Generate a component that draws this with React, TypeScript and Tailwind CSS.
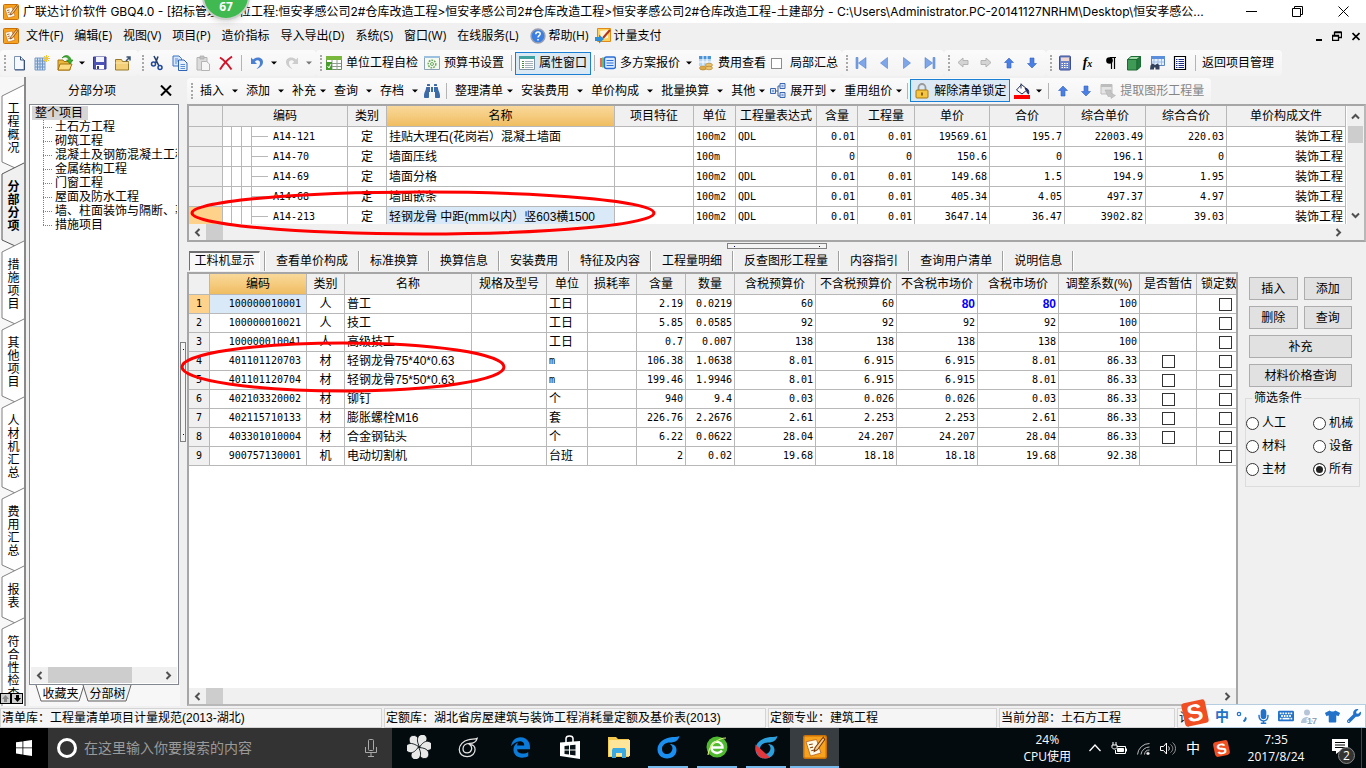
import type { ReactNode } from "react";
import clsx from "clsx";
import { FaBinoculars, FaEdgeLegacy, FaKeyboard, FaMicrophone, FaTshirt, FaWrench } from "react-icons/fa";

/* ---------- icons ---------- */

function Svg({ size = 16, children }: { size?: number; children: ReactNode }) {
  return (
    <svg width={size} height={size} viewBox="0 0 16 16" fill="none" className="shrink-0">
      {children}
    </svg>
  );
}

function AppIcon({ size = 16 }: { size?: number }) {
  return (
    <Svg size={size}>
      <rect x="0.5" y="0.5" width="15" height="15" rx="1" fill="#f6a21c" stroke="#c96f08" />
      <path d="M2 4.500l7-1.500 3 9-7 2z" fill="#fff8e6" stroke="#b55a10" strokeWidth="0.5" />
      <path d="M4 6.500l2.500-.5M4.700 8.500l2-.4M5.500 10.500l3-.8" stroke="#8a4a14" strokeWidth="0.8" />
      <path d="M13.500 1.500L8 8.500l-.5 2.500 2.200-1.200L14.500 3z" fill="#f3c98a" stroke="#7a3708" strokeWidth="0.7" />
    </Svg>
  );
}

const newDoc = (
  <Svg>
    <path d="M3.500 1.500h6l3.500 3.500v9.500H3.500z" fill="#f6faff" stroke="#7c93b4" />
    <path d="M9.500 1.500V5H13M13.500 5v10H4" stroke="#38517c" />
  </Svg>
);
const newSheet = (
  <Svg>
    <path d="M1 3h10v12H1z" fill="#cfe0f4" stroke="#7b9cc6" />
    <path d="M3.500 3v12M6 3v12M8.500 3v12M1 6h10M1 9h10M1 12h10" stroke="#6f93c2" />
    <path d="M12.500 0v7M9 3.500h7M10 1l5 5M15 1l-5 5" stroke="#f7c635" />
  </Svg>
);
const openFile = (
  <Svg>
    <path d="M1 5h5l1 1.500h6V15H1z" fill="#e9b640" stroke="#a8740e" />
    <path d="M3 9h12l-2.500 6H1z" fill="#fbdc82" stroke="#a8740e" />
    <path d="M5 3c3-2 6-1 7 2h-2.500L13 9l3-4h-1.800C13 0 8-1 5 3z" fill="#3fae2e" stroke="#1f7a18" strokeWidth="0.6" />
  </Svg>
);
const save = (
  <Svg>
    <path d="M1.500 2h12.500v12H1.500z" fill="#4e52b4" stroke="#34378e" />
    <path d="M4 2h8v5H4z" fill="#f2f4ff" />
    <path d="M4 10h8v4H4z" fill="#fff" />
    <path d="M5 11h2v3H5z" fill="#34378e" />
  </Svg>
);
const exportFolder = (
  <Svg>
    <path d="M0.500 4.500h6l1 2h6V15h-13z" fill="#f3cf77" stroke="#9a7a2a" />
    <path d="M0.500 8h13" stroke="#fbe7ae" />
    <path d="M11 6l4-4M11.500 2H15v3.500" stroke="#3d5374" strokeWidth="1.500" />
  </Svg>
);
const cut = (
  <Svg>
    <path d="M5 1l5 10M9 1.500L6.500 8" stroke="#27406c" strokeWidth="1.600" />
    <circle cx="4.500" cy="9" r="2" stroke="#20489c" strokeWidth="1.500" />
    <circle cx="11" cy="12.500" r="2" stroke="#20489c" strokeWidth="1.500" />
  </Svg>
);
const copy = (
  <Svg>
    <path d="M1 1h6l2.500 2.500V11H1z" fill="#d6e6fb" stroke="#3f74c4" />
    <path d="M6.500 5h5.500l3 3v7.500H6.500z" fill="#e8f1fd" stroke="#2f64b8" />
    <path d="M8.500 9.500h4.500M8.500 11.500h4.500M8.500 13.500h4.500M3 4h3M3 6h3M3 8h2" stroke="#5b8fd8" />
  </Svg>
);
const paste = (
  <Svg>
    <path d="M2 2.500h10V15H2z" fill="#dcdcdc" stroke="#b4b4b4" />
    <path d="M5 1h4v3H5z" fill="#c4c4c4" stroke="#aaa" strokeWidth="0.700" />
    <path d="M6.500 6.500h5l3 2.500v6.500h-8z" fill="#f6f6f6" stroke="#b4b4b4" />
  </Svg>
);
const remove = (
  <Svg>
    <path d="M2 2.500C6 5 10 9.500 13.500 14.500M14 1.500C9 5 5 9.500 2 14.500" stroke="#d31027" strokeWidth="1.900" />
  </Svg>
);

function UndoIcon({ redo }: { redo?: boolean }) {
  return (
    <svg width="16" height="16" viewBox="0 0 16 16" className={clsx("shrink-0", redo && "-scale-x-100")}>
      <path
        d="M2 2.500v6.500h6L5.800 6.800C8 4.500 11 5 11 8c0 2.500-1.500 4-3.500 6 4-1.500 6.500-4 6.500-7 0-4.500-6-6-10-2.500z"
        fill={redo ? "#cdcdcd" : "#4b7fd4"}
      />
    </svg>
  );
}

const checkSheet = (
  <Svg>
    <path d="M0.500 1.500h15v13H0.500z" fill="#fff" stroke="#6f8f5f" />
    <path d="M0 1h16v4H0z" fill="#79b83d" />
    <path d="M1 8.500h14M1 11.500h14M6 5v10M11 5v10" stroke="#8e9e8e" />
    <path d="M0 7h6v8H0z" fill="#479d2b" />
    <path d="M1.500 11l1.500 2 2-4" stroke="#fff" />
  </Svg>
);
const bookSettings = (
  <Svg>
    <path d="M0.500 1.500h15v13H0.500z" fill="#f4faf0" stroke="#8aa2b4" />
    <path d="M0 1h16v2H0z" fill="#9cc0df" />
    <circle cx="8" cy="9" r="3.800" stroke="#6dab60" strokeWidth="1.500" strokeDasharray="1.800 1" />
    <circle cx="8" cy="9" r="1.500" stroke="#6dab60" />
  </Svg>
);
const propWindow = (
  <Svg>
    <path d="M0.500 1.500h15v13H0.500z" fill="#fdfdfd" stroke="#7f94a4" />
    <path d="M0 1h16v3H0z" fill="#41a3a0" />
    <path d="M3 6.500h2M3 8.500h2M3 10.500h2M3 12.500h2" stroke="#4b8a3b" />
    <path d="M6 6.500h8M6 8.500h8M6 10.500h8M6 12.500h8" stroke="#a4b0b8" />
  </Svg>
);
const multiQuote = (
  <Svg>
    <path d="M1 3v9" stroke="#e33" strokeWidth="1.500" />
    <path d="M3 2.500v10" stroke="#4aab38" strokeWidth="1.500" />
    <rect x="4.500" y="2" width="11" height="11.500" rx="2" fill="#dcecff" stroke="#2c6ed5" strokeWidth="1.400" />
    <path d="M6.500 5.500h7M6.500 8h7M6.500 10.500h7" stroke="#2c6ed5" />
  </Svg>
);
const feeView = (
  <Svg>
    <path d="M1 1h12v10H1z" fill="#b5d5f2" />
    <path d="M1 1h12v3H1z" fill="#4b94d8" />
    <path d="M5 1v10M9 1v10M1 7h12" stroke="#fff" />
    <ellipse cx="5" cy="13" rx="3.500" ry="2" fill="#dba94c" stroke="#b07d24" strokeWidth="0.600" />
    <ellipse cx="11" cy="10" rx="3.500" ry="1.800" fill="#eac36c" stroke="#b07d24" strokeWidth="0.600" />
    <ellipse cx="11" cy="13" rx="3.500" ry="1.800" fill="#eac36c" stroke="#b07d24" strokeWidth="0.600" />
  </Svg>
);
const first = (
  <Svg>
    <path d="M3 2.500h2v11H3zM13 2.500v11L5.500 8z" fill="#7fa6e8" stroke="#3f72c4" strokeWidth="0.500" />
  </Svg>
);
const prev = (
  <Svg>
    <path d="M11.500 2.500v11L4.500 8z" fill="#7fa6e8" stroke="#3f72c4" strokeWidth="0.500" />
  </Svg>
);
const next = (
  <Svg>
    <path d="M4.500 2.500v11l7-5.500z" fill="#7fa6e8" stroke="#3f72c4" strokeWidth="0.500" />
  </Svg>
);
const last = (
  <Svg>
    <path d="M11 2.500h2v11h-2zM3 2.500v11L10.500 8z" fill="#7fa6e8" stroke="#3f72c4" strokeWidth="0.500" />
  </Svg>
);
const left = (
  <Svg>
    <path d="M8 3L3 7.500 8 12V9.500h5v-4H8z" fill="#d4d4d4" stroke="#b4b4b4" />
  </Svg>
);
const right = (
  <Svg>
    <path d="M8 3l5 4.500L8 12V9.500H3v-4h5z" fill="#d4d4d4" stroke="#b4b4b4" />
  </Svg>
);
const up = (
  <Svg>
    <path d="M8 3l4.500 4.500H10V13H6V7.500H3.500z" fill="#4a80e6" stroke="#3563bd" strokeWidth="0.600" />
  </Svg>
);
const down = (
  <Svg>
    <path d="M8 13L3.500 8.500H6V3h4v5.500h2.500z" fill="#4a80e6" stroke="#3563bd" strokeWidth="0.600" />
  </Svg>
);
const calculator = (
  <Svg>
    <rect x="2.500" y="1" width="11" height="14" rx="1" fill="#6c83c8" stroke="#3d4f94" />
    <path d="M4 2.500h8V6H4z" fill="#f0d8d0" />
    <path d="M4.500 8.500h7M4.500 10.500h7M4.500 12.500h7" stroke="#fff" strokeDasharray="1.500 1" />
  </Svg>
);
const pilcrow = (
  <Svg>
    <path d="M13 2.500H7M8.500 3v11M11.500 3v11" stroke="#000" strokeWidth="1.200" />
    <circle cx="6.500" cy="5.500" r="3.300" fill="#000" />
  </Svg>
);
const cube = (
  <Svg>
    <path d="M1.500 4.500h9.500V15H1.500z" fill="#3f9a55" stroke="#1c6a34" />
    <path d="M1.500 4.500L5 1.500h9.500L11 4.500z" fill="#a4d8a8" stroke="#1c6a34" />
    <path d="M11 15V4.500l3.500-3V12z" fill="#207a3c" stroke="#1c6a34" />
  </Svg>
);
const searchSheet = (
  <Svg>
    <path d="M2.500 1.500h13v9h-13z" fill="#e4effc" stroke="#5b84c4" />
    <path d="M2 1h14v3H2z" fill="#5b8fdc" />
    <path d="M5 4v6M9 4v6M12.500 4v6M3 7h12" stroke="#9dbbe6" />
    <path d="M1.500 10.500l2-2 2.500 1.500 2.500-1.500 2 2v4h-4v-2H5v2H1z" fill="#33415c" />
  </Svg>
);
const listIcon = (
  <Svg>
    <path d="M2.500 1.500h11v13h-11z" fill="#fff" stroke="#000" strokeWidth="1.200" />
    <path d="M4 4.500h1.500M4 6.500h1.500M4 8.500h1.500M4 10.500h1.500M4 12.500h1.500M6.500 4.500H12M6.500 6.500H12M6.500 8.500H12M6.500 10.500H12M6.500 12.500H12" stroke="#1a2a80" />
  </Svg>
);
const expandTree = (
  <Svg>
    <path d="M5 8h3M8 3v10M8 3h2M8 13h2" stroke="#3c5f9c" />
    <path d="M0.500 5.500h5v5h-5zM10 0.500h5v5h-5zM10 9.500h5v5h-5z" fill="#d4e3f8" stroke="#3c66b0" />
    <path d="M2 8h2M11.500 3h2M11.500 12h2" stroke="#3c66b0" />
  </Svg>
);
const lock = (
  <Svg>
    <path d="M4.500 7V4.500a3.500 3.500 0 017 0V7" stroke="#9a9a9a" strokeWidth="1.800" />
    <rect x="2" y="7" width="12" height="8" rx="1" fill="#f5c542" stroke="#a9790f" />
    <path d="M8 9.500v3" stroke="#6c4708" strokeWidth="1.600" />
  </Svg>
);
const paintBucket = (
  <Svg>
    <path d="M2.500 7L7.500 1.500l6 5L8 11z" fill="#fff" stroke="#222a50" />
    <path d="M7 0.500v5M13 5.500c2 2 2 4 1.500 5.500C13 10.500 13 7.500 11 5.500z" fill="#222a80" stroke="#222a50" />
    <path d="M0 12h16v4H0z" fill="#f00" />
  </Svg>
);
const extract = (
  <Svg>
    <path d="M1 1.500h11V11H1z" fill="#e4e4e4" stroke="#bdbdbd" />
    <path d="M1 1h11v3H1z" fill="#bdbdbd" />
    <path d="M5 7h6v3l4.500 2.500L11 15.500v-2H8z" fill="#c4c4c4" stroke="#acacac" strokeWidth="0.500" />
  </Svg>
);
const help = (
  <Svg>
    <circle cx="8" cy="8" r="7" fill="#3b7fe0" stroke="#9a9fb0" strokeWidth="1.400" />
    <path d="M5.800 6.200c0-3 4.400-2.800 4.400-.2 0 1.600-2.200 1.700-2.200 3.500M8 11v1.500" stroke="#fff" strokeWidth="1.500" />
  </Svg>
);
const payIcon = (
  <Svg>
    <path d="M2.500 0.500h13v13h-13z" fill="#fbd25c" stroke="#dd8a18" />
    <path d="M5 3l8-1v8l-7 1z" fill="#fff6df" />
    <path d="M15 2L8 10" stroke="#b5341c" strokeWidth="2" />
    <path d="M0 9h4V6.500L9 11l-5 4.500V13H0z" fill="#2d8fd8" />
  </Svg>
);

function Swirl({ color, band }: { color: string; band?: boolean }) {
  return (
    <svg width="24" height="24" viewBox="0 0 24 24" fill="none">
      <path
        d="M23.500 1c-3 1.500-6 .5-10 1.500C6 4 1.500 9 1.500 14.500c0 5 4 9 9.500 9 6 0 9.500-4 9.500-8.500 0-4-3-6-6.500-6 2.500 2 3 4 2 6.500-1 2.500-3 3.500-5 3.500-3 0-5-2-5-5 0-4 3.500-6.500 8-6.500 5 0 8.500-2 9.500-6.500z"
        fill={color}
      />
      {band && <path d="M1.500 9.500L16 22.500c-3 1.500-8 1.500-11-1-3-3-4-7.500-3.500-12z" fill="#e0383c" />}
    </svg>
  );
}

/* ---------- toolbar pieces ---------- */

function Arrow({ dim }: { dim?: boolean }) {
  return (
    <svg width="6" height="4" viewBox="0 0 6 4" className="shrink-0">
      <path d="M0 0.500h6l-3 3z" fill={dim ? "#777" : "#000"} />
    </svg>
  );
}

function Grip() {
  return <div className="h-4 w-[3px] shrink-0 border-l-2 border-dotted border-[#a8a8a8]" />;
}

function Sep({ narrow }: { narrow?: boolean }) {
  return (
    <div className={clsx("flex shrink-0 justify-center", narrow ? "w-1.5" : "w-2")}>
      <div className="h-4 w-px bg-[#b4b4b4]" />
    </div>
  );
}

function Band({ className, children }: { className?: string; children: ReactNode }) {
  return (
    <div
      className={clsx(
        "flex h-[26px] shrink-0 items-center rounded-sm bg-gradient-to-b from-[#fbfbfb] to-[#f3f3f3] pl-1",
        className,
      )}
    >
      <Grip />
      {children}
    </div>
  );
}

function IconBtn({ icon, label }: { icon: ReactNode; label: string }) {
  return (
    <button aria-label={label} className="flex h-6 w-[23px] shrink-0 items-center justify-center">
      {icon}
    </button>
  );
}

function ArrowBtn({ label, dim }: { label: string; dim?: boolean }) {
  return (
    <button aria-label={label} className="flex h-6 w-3 shrink-0 items-center justify-center">
      <Arrow dim={dim} />
    </button>
  );
}

interface ToolProps {
  icon?: ReactNode;
  label: string;
  pressed?: boolean;
  disabled?: boolean;
}

function Tool({ icon, label, pressed, disabled }: ToolProps) {
  return (
    <button
      className={clsx(
        "flex h-[23px] shrink-0 items-center gap-1 px-[3px] whitespace-nowrap",
        pressed && "border border-[#1b7fd4] bg-[#dbe9f5]",
        disabled && "text-[#858585]",
      )}
    >
      {icon}
      {label}
    </button>
  );
}

function MenuTool({ icon, label, split }: { icon?: ReactNode; label: string; split?: boolean }) {
  return (
    <button
      className={clsx(
        "flex h-[23px] shrink-0 items-center whitespace-nowrap pr-0.5",
        split ? "gap-2" : "gap-1",
        icon ? "pl-[3px]" : "pl-1.5",
      )}
    >
      {icon}
      {label}
      <Arrow />
    </button>
  );
}

/* ---------- window chrome ---------- */

function TitleBar() {
  return (
    <header className="flex h-[23px] shrink-0 items-center bg-white pl-[3px]">
      <AppIcon />
      <h1 className="ml-1 min-w-0 flex-1 truncate font-['Inter','Noto_Sans_CJK_SC',sans-serif]">
        广联达计价软件 GBQ4.0 - [招标管理&gt;单位工程:恒安孝感公司2#仓库改造工程&gt;恒安孝感公司2#仓库改造工程&gt;恒安孝感公司2#仓库改造工程-土建部分 -
        C:\Users\Administrator.PC-20141127NRHM\Desktop\恒安孝感公...
      </h1>
      <div className="flex">
        <button aria-label="最小化" className="flex h-[23px] w-[46px] items-center justify-center">
          <svg width="11" height="11"><path d="M0 5.500h11" stroke="#000" /></svg>
        </button>
        <button aria-label="还原" className="flex h-[23px] w-[46px] items-center justify-center">
          <svg width="11" height="11" fill="none" stroke="#000"><path d="M0.500 2.500h8v8h-8zM2.500 2.500v-2h8v8h-2" /></svg>
        </button>
        <button aria-label="关闭" className="flex h-[23px] w-[46px] items-center justify-center">
          <svg width="11" height="11"><path d="M0.500 0.500l10 10M10.500 0.500l-10 10" stroke="#000" /></svg>
        </button>
      </div>
    </header>
  );
}

const menus = ["文件(F)", "编辑(E)", "视图(V)", "项目(P)", "造价指标", "导入导出(D)", "系统(S)", "窗口(W)", "在线服务(L)"];

function MenuBar() {
  return (
    <nav className="flex h-[26px] shrink-0 items-center gap-[11px] pl-[3px] whitespace-nowrap">
      <div className="-mr-1">
        <AppIcon />
      </div>
      {menus.map((m) => (
        <button key={m}>{m}</button>
      ))}
      <div className="flex gap-1.5">
        <button className="flex items-center gap-[3px]">{help}帮助(H)</button>
        <button className="flex items-center gap-[3px]">{payIcon}计量支付</button>
      </div>
      <div className="ml-auto flex items-center gap-2.5 pr-1.5">
        <button aria-label="最小化文档">
          <svg width="6" height="10"><path d="M0 9h6" stroke="#000" strokeWidth="2" /></svg>
        </button>
        <button aria-label="还原文档">
          <svg width="10" height="10" fill="none" stroke="#000"><path d="M0.500 4.500h6v5h-6zM0.500 5h6M2.500 4V1.500h7v5H7M2.500 1h7" strokeWidth="1.300" /></svg>
        </button>
        <button aria-label="关闭文档">
          <svg width="8" height="9"><path d="M0.500 1l7 7M7.500 1l-7 7" stroke="#000" strokeWidth="1.700" /></svg>
        </button>
      </div>
    </nav>
  );
}

function MainToolbar() {
  return (
    <div className="flex h-7 shrink-0 items-center">
      <Band className="w-[138px]">
        <IconBtn icon={newDoc} label="新建" />
        <IconBtn icon={newSheet} label="新建工程" />
        <IconBtn icon={openFile} label="打开" />
        <ArrowBtn label="最近文件" />
        <IconBtn icon={save} label="保存" />
        <IconBtn icon={exportFolder} label="导出" />
      </Band>
      <Band className="w-[178px]">
        <IconBtn icon={cut} label="剪切" />
        <IconBtn icon={copy} label="复制" />
        <IconBtn icon={paste} label="粘贴" />
        <IconBtn icon={remove} label="删除" />
        <Sep />
        <IconBtn icon={<UndoIcon />} label="撤销" />
        <ArrowBtn label="撤销列表" />
        <IconBtn icon={<UndoIcon redo />} label="恢复" />
        <ArrowBtn label="恢复列表" dim />
      </Band>
      <Band className="w-[526px]">
        <Tool icon={checkSheet} label="单位工程自检" />
        <Tool icon={bookSettings} label="预算书设置" />
        <Sep />
        <Tool icon={propWindow} label="属性窗口" pressed />
        <Sep narrow />
        <Tool icon={multiQuote} label="多方案报价" />
        <ArrowBtn label="多方案列表" />
        <Tool icon={feeView} label="费用查看" />
        <label className="flex items-center gap-2 pl-0.5 whitespace-nowrap">
          <input type="checkbox" className="size-[11px] appearance-none border border-[#8c8c8c] bg-white" />
          局部汇总
        </label>
      </Band>
      <Band className="w-[102px]">
        <IconBtn icon={first} label="首条" />
        <IconBtn icon={prev} label="上一条" />
        <IconBtn icon={next} label="下一条" />
        <IconBtn icon={last} label="末条" />
      </Band>
      <Band className="w-[102px]">
        <IconBtn icon={left} label="左移" />
        <IconBtn icon={right} label="右移" />
        <IconBtn icon={up} label="上移" />
        <IconBtn icon={down} label="下移" />
      </Band>
      <Band className="w-[236px]">
        <IconBtn icon={calculator} label="计算器" />
        <IconBtn
          icon={
            <span className="font-['Liberation_Serif',serif] text-sm font-bold italic">
              f<span className="text-[10px]">x</span>
            </span>
          }
          label="函数"
        />
        <IconBtn icon={pilcrow} label="特殊符号" />
        <IconBtn icon={cube} label="图元" />
        <IconBtn icon={searchSheet} label="查找" />
        <IconBtn icon={listIcon} label="列表" />
        <Sep />
        <Tool label="返回项目管理" />
      </Band>
    </div>
  );
}

function EditToolbar() {
  return (
    <div className="flex h-[27px] shrink-0 items-center">
      <Band className="pr-1">
        <MenuTool label="插入" split />
        <MenuTool label="添加" split />
        <MenuTool label="补充" />
        <MenuTool label="查询" split />
        <MenuTool label="存档" split />
        <IconBtn icon={<FaBinoculars className="size-4 text-[#3c6aa8]" />} label="查找" />
        <Sep narrow />
        <MenuTool label="整理清单" />
        <MenuTool label="安装费用" split />
        <MenuTool label="单价构成" split />
        <MenuTool label="批量换算" split />
        <MenuTool label="其他" />
        <MenuTool icon={expandTree} label="展开到" />
        <MenuTool label="重用组价" />
        <Sep narrow />
        <Tool icon={lock} label="解除清单锁定" pressed />
        <IconBtn icon={paintBucket} label="填充颜色" />
        <ArrowBtn label="颜色列表" />
        <Sep narrow />
        <IconBtn icon={up} label="上移" />
        <IconBtn icon={down} label="下移" />
        <Tool icon={extract} label="提取图形工程量" disabled />
      </Band>
    </div>
  );
}

/* ---------- left side ---------- */

const sideTabs = ["工程概况", "分部分项", "措施项目", "其他项目", "人材机汇总", "费用汇总", "报表", "符合性检查"];

function SideTab({ label, active }: { label: string; active: boolean }) {
  const h = label.length * 13 + 26;
  return (
    <button className="relative flex w-6 shrink-0 justify-center py-[13px] pl-[3px]">
      <svg width="24" height={h} className="absolute top-0 left-0 overflow-visible" fill={active ? "#f0f0f0" : "#fff"}>
        <path d={`M24 -4L2 7V${h - 5}L24 ${h + 5}`} stroke={active ? "#555" : "#808080"} />
      </svg>
      <span className={clsx("relative w-3 text-xs leading-[13px] break-all", active && "font-bold")}>{label}</span>
    </button>
  );
}

function SideTabs() {
  return (
    <div className="relative flex w-[26px] shrink-0 flex-col overflow-hidden border-r-2 border-[#8a8a8a] bg-[#f7f7f7] pt-3">
      {sideTabs.map((t) => (
        <SideTab key={t} label={t} active={t === "分部分项"} />
      ))}
      <div className="absolute bottom-0.5 left-0 flex bg-[#d0d0d0]">
        <button aria-label="向上滚动" className="flex h-[11px] w-[11px] items-center justify-center border border-black text-[#888]">
          <svg width="7" height="7"><path d="M3.500 0L7 4H5v3H2V4H0z" fill="currentColor" /></svg>
        </button>
        <button aria-label="向下滚动" className="flex h-[11px] w-3 items-center justify-center border border-black">
          <svg width="7" height="7"><path d="M3.500 7L7 3H5V0H2v3H0z" fill="currentColor" /></svg>
        </button>
      </div>
    </div>
  );
}

function Chevron({ dir }: { dir: "left" | "right" | "up" | "down" }) {
  const paths = {
    left: "M6.500 1L3 4.500 6.500 8",
    right: "M2.500 1L6 4.500 2.500 8",
    up: "M1 6.500L4.500 3 8 6.500",
    down: "M1 2.500L4.500 6 8 2.500",
  };
  return (
    <svg width="9" height="9" fill="none" stroke="#505050" strokeWidth="2">
      <path d={paths[dir]} />
    </svg>
  );
}

function HScroll({ thumb, className }: { thumb: string; className?: string }) {
  return (
    <div className={clsx("flex h-4 shrink-0 items-center bg-[#f0f0f0]", className)}>
      <button aria-label="向左滚动" className="flex w-[17px] justify-center">
        <Chevron dir="left" />
      </button>
      <div className={clsx("h-full bg-[#cdcdcd]", thumb)} />
      <button aria-label="向右滚动" className="ml-auto flex w-[17px] justify-center">
        <Chevron dir="right" />
      </button>
    </div>
  );
}

const treeItems = [
  "土石方工程",
  "砌筑工程",
  "混凝土及钢筋混凝土工程",
  "金属结构工程",
  "门窗工程",
  "屋面及防水工程",
  "墙、柱面装饰与隔断、幕墙工程",
  "措施项目",
];

function TreePanel() {
  return (
    <aside className="flex w-[154px] shrink-0 flex-col pl-[3px]">
      <div className="flex h-[27px] shrink-0 items-center justify-between pr-2 pl-[39px]">
        <h2>分部分项</h2>
        <button aria-label="关闭面板">
          <svg width="12" height="11"><path d="M1 0.500l10 10M11 0.500l-10 10" stroke="#000" strokeWidth="2" /></svg>
        </button>
      </div>
      <div className="flex min-h-0 w-[150px] flex-1 flex-col overflow-hidden border border-[#828790] bg-white p-px">
        <div className="min-h-0 flex-1 pl-px whitespace-nowrap">
          <div className="h-[14px] w-14 bg-[#d6d6d6] pl-[3px] leading-[14px]">整个项目</div>
          <ul className="relative overflow-hidden">
            <div className="absolute top-0 bottom-[7px] left-[11px] border-l border-dotted border-[#808080]" />
            {treeItems.map((t) => (
              <li key={t} className="flex h-[14px] items-center gap-[3px] pl-[11px] leading-[14px]">
                <span className="w-[9px] shrink-0 border-t border-dotted border-[#808080]" />
                {t}
              </li>
            ))}
          </ul>
        </div>
        <HScroll thumb="w-[84px]" />
      </div>
      <div className="flex h-[21px] shrink-0 bg-[#f7f7f7] pl-2">
        {["收藏夹", "分部树"].map((t, i) => (
          <button key={t} className="relative h-[17px] w-[47px] leading-[17px]">
            <svg width="51" height="17" className="absolute top-0 left-0 overflow-visible" fill={i === 0 ? "#fff" : "#f0f0f0"}>
              <path d="M-1 0l5 16h38l5-16" stroke="#606060" />
            </svg>
            <span className="relative">{t}</span>
          </button>
        ))}
      </div>
    </aside>
  );
}

function Splitter() {
  return (
    <div className="flex w-[7px] shrink-0 items-center">
      <div className="flex h-[100px] w-[6px] flex-col items-center justify-between border border-[#808080] bg-[#f4f4f4] py-1.5">
        <i className="size-px bg-[#000080]" />
        <i className="size-px bg-[#000080]" />
      </div>
    </div>
  );
}

/* ---------- grids ---------- */

const th = "border-r border-b border-[#b8b8b8] bg-[#f0f0f0] p-0 text-center font-normal whitespace-nowrap";
const td = "overflow-hidden border-r border-b border-[#b8b8b8] px-0.5 py-0 whitespace-nowrap";
const num = "text-right font-['DejaVu_Sans_Mono',monospace] text-[10px]";
const mono = "font-['DejaVu_Sans_Mono',monospace] text-[10px]";
const headHot = "bg-gradient-to-b from-[#f9d99a] to-[#f0bd60]";

const itemHeads = ["", "编码", "类别", "名称", "项目特征", "单位", "工程量表达式", "含量", "工程量", "单价", "合价", "综合单价", "综合合价", "单价构成文件"];

const items = [
  ["A14-121", "挂贴大理石(花岗岩）混凝土墙面", "100m2", "QDL", "0.01", "0.01", "19569.61", "195.7", "22003.49", "220.03"],
  ["A14-70", "墙面压线", "100m", "", "0", "0", "150.6", "0", "196.1", "0"],
  ["A14-69", "墙面分格", "100m2", "QDL", "0.01", "0.01", "149.68", "1.5", "194.9", "1.95"],
  ["A14-68", "墙面嵌条", "100m2", "QDL", "0.01", "0.01", "405.34", "4.05", "497.37", "4.97"],
  ["A14-213", "轻钢龙骨 中距(mm以内）竖603横1500", "100m2", "QDL", "0.01", "0.01", "3647.14", "36.47", "3902.82", "39.03"],
];

function ItemGrid() {
  return (
    <section className="relative flex h-[138px] shrink-0 flex-col border-2 border-[#a6a6a6] border-r-[#b8b8b8] bg-white">
      <div className="flex min-h-0 flex-1">
        <div className="min-w-0 flex-1 overflow-hidden">
          <table className="w-[1157px] table-fixed border-separate border-spacing-0">
            <colgroup>
              <col className="w-[34px]" />
              <col className="w-[125px]" />
              <col className="w-[39px]" />
              <col className="w-[228px]" />
              <col className="w-[79px]" />
              <col className="w-[42px]" />
              <col className="w-[81px]" />
              <col className="w-[41px]" />
              <col className="w-[57px]" />
              <col className="w-[75px]" />
              <col className="w-[75px]" />
              <col className="w-[81px]" />
              <col className="w-[81px]" />
              <col className="w-[119px]" />
            </colgroup>
            <thead>
              <tr className="h-[21px]">
                {itemHeads.map((h) => (
                  <th key={h} className={clsx(th, h === "名称" && headHot)}>
                    {h}
                  </th>
                ))}
              </tr>
            </thead>
            <tbody>
              {items.map(([code, name, unit, expr, ...nums], i) => (
                <tr key={code} className="h-5">
                  <td className={clsx(td, i === 4 ? "bg-[#ffd28c]" : "bg-[#f0f0f0]")} />
                  <td className="border-r border-b border-[#b8b8b8] p-0">
                    <div className="flex h-[19px] items-center">
                      <span className="h-full w-[9px] border-r border-[#b8b8b8]" />
                      <span className="h-full w-2.5 border-r border-[#b8b8b8]" />
                      <span className="h-full w-2.5 border-r border-[#b8b8b8]" />
                      <span className="mr-[5px] w-4 border-t border-[#b8b8b8]" />
                      <span className={mono}>{code}</span>
                    </div>
                  </td>
                  <td className={clsx(td, "text-center")}>定</td>
                  <td className={clsx(td, i === 4 && "bg-[#d9e9f7]")}>{name}</td>
                  <td className={td} />
                  <td className={clsx(td, mono)}>{unit}</td>
                  <td className={clsx(td, mono)}>{expr}</td>
                  {nums.map((n, c) => (
                    <td key={c} className={clsx(td, num)}>
                      {n}
                    </td>
                  ))}
                  <td className={clsx(td, "text-right")}>装饰工程</td>
                </tr>
              ))}
            </tbody>
          </table>
        </div>
        <div className="flex w-[17px] shrink-0 flex-col items-center bg-[#f0f0f0]">
          <button aria-label="向上滚动" className="flex h-5 items-center">
            <Chevron dir="up" />
          </button>
          <div className="h-[17px] w-[15px] bg-[#cdcdcd]" />
          <button aria-label="向下滚动" className="mt-auto flex h-[17px] items-center">
            <Chevron dir="down" />
          </button>
        </div>
      </div>
      <HScroll thumb="w-[17px]" className="pr-[17px]" />
      <svg width="468" height="46" className="absolute top-[84px] left-px" fill="none">
        <ellipse cx="233" cy="23" rx="231" ry="21" stroke="#f00" strokeWidth="3" />
      </svg>
    </section>
  );
}

const detailTabs = [
  "查看单价构成",
  "标准换算",
  "换算信息",
  "安装费用",
  "特征及内容",
  "工程量明细",
  "反查图形工程量",
  "内容指引",
  "查询用户清单",
  "说明信息",
];

function TabRule() {
  return (
    <span className="flex h-5 shrink-0">
      <span className="w-px bg-[#a0a0a0]" />
      <span className="w-px bg-white" />
    </span>
  );
}

function DetailTabs() {
  return (
    <div className="flex h-[23px] shrink-0 items-center pl-0.5">
      <button className="mr-1 h-5 w-[71px] border border-t-2 border-t-[#707070] border-r-white border-b-white border-l-[#707070] bg-[#f8f8f8]">
        工料机显示
      </button>
      <TabRule />
      {detailTabs.map((t) => (
        <button key={t} className="flex h-5 items-center whitespace-nowrap">
          <span className="px-2.5">{t}</span>
          <TabRule />
        </button>
      ))}
    </div>
  );
}

const resHeads = ["", "编码", "类别", "名称", "规格及型号", "单位", "损耗率", "含量", "数量", "含税预算价", "不含税预算价", "不含税市场价", "含税市场价", "调整系数(%)", "是否暂估", "锁定数量"];

const resources = [
  { code: "100000010001", kind: "人", name: "普工", unit: "工日", nums: ["2.19", "0.0219", "60", "60", "80", "80", "100"] },
  { code: "100000010021", kind: "人", name: "技工", unit: "工日", nums: ["5.85", "0.0585", "92", "92", "92", "92", "100"] },
  { code: "100000010041", kind: "人", name: "高级技工", unit: "工日", nums: ["0.7", "0.007", "138", "138", "138", "138", "100"] },
  { code: "401101120703", kind: "材", name: "轻钢龙骨75*40*0.63", unit: "m", nums: ["106.38", "1.0638", "8.01", "6.915", "6.915", "8.01", "86.33"] },
  { code: "401101120704", kind: "材", name: "轻钢龙骨75*50*0.63", unit: "m", nums: ["199.46", "1.9946", "8.01", "6.915", "6.915", "8.01", "86.33"] },
  { code: "402103320002", kind: "材", name: "铆钉", unit: "个", nums: ["940", "9.4", "0.03", "0.026", "0.026", "0.03", "86.33"] },
  { code: "402115710133", kind: "材", name: "膨胀螺栓M16", unit: "套", nums: ["226.76", "2.2676", "2.61", "2.253", "2.253", "2.61", "86.33"] },
  { code: "403301010004", kind: "材", name: "合金钢钻头", unit: "个", nums: ["6.22", "0.0622", "28.04", "24.207", "24.207", "28.04", "86.33"] },
  { code: "900757130001", kind: "机", name: "电动切割机", unit: "台班", nums: ["2", "0.02", "19.68", "18.18", "18.18", "19.68", "92.38"] },
];

function Check({ label }: { label: string }) {
  return (
    <input
      type="checkbox"
      aria-label={label}
      className="mx-auto block size-[13px] appearance-none border border-[#333] bg-white"
    />
  );
}

function ResourceGrid() {
  return (
    <section className="relative flex min-w-0 flex-1 flex-col border-2 border-[#a6a6a6] border-b-[#b8b8b8] bg-white">
      <div className="min-h-0 flex-1 overflow-hidden">
        <table className="w-[1065px] table-fixed border-separate border-spacing-0">
          <colgroup>
            <col className="w-[21px]" />
            <col className="w-[97px]" />
            <col className="w-[38px]" />
            <col className="w-[127px]" />
            <col className="w-[75px]" />
            <col className="w-[41px]" />
            <col className="w-[49px]" />
            <col className="w-[49px]" />
            <col className="w-[49px]" />
            <col className="w-[81px]" />
            <col className="w-[81px]" />
            <col className="w-[81px]" />
            <col className="w-[81px]" />
            <col className="w-[81px]" />
            <col className="w-[57px]" />
            <col className="w-[57px]" />
          </colgroup>
          <thead>
            <tr className="h-[21px]">
              {resHeads.map((h) => (
                <th key={h} className={clsx(th, h === "编码" && headHot)}>
                  {h}
                </th>
              ))}
            </tr>
          </thead>
          <tbody>
            {resources.map((r, i) => (
              <tr key={r.code} className="h-[19px]">
                <td className={clsx(td, mono, "text-center", i === 0 ? "bg-[#ffd28c]" : "bg-[#f0f0f0]")}>{i + 1}</td>
                <td className={clsx(td, num, "pr-[5px]", i === 0 && "bg-[#d9e9f7]")}>{r.code}</td>
                <td className={clsx(td, "text-center")}>{r.kind}</td>
                <td className={td}>{r.name}</td>
                <td className={td} />
                <td className={clsx(td, r.unit === "m" && mono)}>{r.unit}</td>
                <td className={td} />
                {r.nums.map((n, c) =>
                  n === "80" ? (
                    <td key={c} className={clsx(td, "text-right font-bold text-[#0000ff]")}>
                      {n}
                    </td>
                  ) : (
                    <td key={c} className={clsx(td, num)}>
                      {n}
                    </td>
                  ),
                )}
                <td className={td}>{r.kind === "材" && <Check label={`${r.name} 是否暂估`} />}</td>
                <td className={td}>
                  <Check label={`${r.name} 锁定数量`} />
                </td>
              </tr>
            ))}
          </tbody>
        </table>
      </div>
      <HScroll thumb="w-[17px]" />
      <svg width="328" height="52" className="absolute top-[67px] -left-2.5" fill="none">
        <ellipse cx="164" cy="26" rx="161" ry="24" stroke="#f00" strokeWidth="3" />
      </svg>
    </section>
  );
}

function PanelButton({ label, className }: { label: string; className: string }) {
  return <button className={clsx("h-[23px] border border-[#adadad] bg-[#e1e1e1]", className)}>{label}</button>;
}

const filters = ["人工", "机械", "材料", "设备", "主材", "所有"];

function SidePanel() {
  return (
    <aside className="w-32 shrink-0 pt-[5px] pl-[7px]">
      <div className="grid w-[107px] grid-cols-2 gap-1.5 pl-1">
        <PanelButton label="插入" className="w-full" />
        <PanelButton label="添加" className="w-full" />
        <PanelButton label="删除" className="w-full" />
        <PanelButton label="查询" className="w-full" />
        <PanelButton label="补充" className="col-span-2" />
        <PanelButton label="材料价格查询" className="col-span-2" />
      </div>
      <fieldset className="mt-[3px] mr-1.5 border border-[#dcdcdc] pb-2">
        <legend className="ml-1.5 px-0.5 leading-4">筛选条件</legend>
        <div className="grid grid-cols-[67px_1fr] gap-y-[5px] pt-2">
          {filters.map((f) => (
            <label key={f} className="flex h-[18px] items-center gap-[3px] whitespace-nowrap">
              <input
                type="radio"
                name="filter"
                defaultChecked={f === "所有"}
                className="size-[13px] appearance-none rounded-full border border-[#333] bg-white checked:bg-[#222] checked:shadow-[inset_0_0_0_2px_white]"
              />
              {f}
            </label>
          ))}
        </div>
      </fieldset>
    </aside>
  );
}

/* ---------- bottom bars ---------- */

function StatusCell({ className, children }: { className: string; children: ReactNode }) {
  return (
    <div className={clsx("h-5 overflow-hidden border border-[#d4d4d4] bg-[#f5f5f5] pl-px leading-[18px] whitespace-nowrap", className)}>
      {children}
    </div>
  );
}

function SogouLogo({ className }: { className: string }) {
  return (
    <span
      className={clsx(
        "flex shrink-0 -rotate-12 items-center justify-center rounded-[3px] bg-[#f04e23] font-['Liberation_Sans',sans-serif] font-bold text-white",
        className,
      )}
    >
      S
    </span>
  );
}

function StatusBar() {
  return (
    <footer className="relative flex h-[22px] shrink-0 gap-0.5 pt-0.5 font-['Liberation_Sans','Noto_Sans_CJK_SC',sans-serif]">
      <StatusCell className="w-[382px]">清单库：工程量清单项目计量规范(2013-湖北)</StatusCell>
      <StatusCell className="w-[382px]">定额库：湖北省房屋建筑与装饰工程消耗量定额及基价表(2013)</StatusCell>
      <StatusCell className="w-[229px]">定额专业：建筑工程</StatusCell>
      <StatusCell className="w-[176px]">当前分部：土石方工程</StatusCell>
      <StatusCell className="flex-1">计税模式</StatusCell>
      <div className="absolute right-0 bottom-0 flex h-6 w-[178px] items-center justify-between border border-[#b5cde0] bg-[#fbfdff] pr-1 pl-[26px] text-[#2172c8]">
        <SogouLogo className="absolute -top-1 -left-1.5 size-6 text-[24px]" />
        <span className="text-sm font-bold">中</span>
        <svg width="12" height="12" fill="none">
          <circle cx="3" cy="4" r="1.700" stroke="currentColor" strokeWidth="1.200" />
          <path d="M9 7.500c1.500 1 0 3-1.500 4" stroke="currentColor" strokeWidth="2" />
        </svg>
        <FaMicrophone className="size-[15px]" />
        <FaKeyboard className="size-4" />
        <svg width="16" height="15" viewBox="0 0 16 15" fill="#b5c4d6">
          <circle cx="6" cy="3.500" r="3" />
          <path d="M0 14c0-8 12-8 12 0z" />
          <text x="6" y="15" fontSize="9" fontWeight="bold" fill="#8ea3bb" stroke="#fff" strokeWidth="2" paintOrder="stroke">17</text>
        </svg>
        <FaTshirt className="size-[15px]" />
        <FaWrench className="size-3.5" />
      </div>
    </footer>
  );
}

function TaskIcon({ label, open, active, children }: { label: string; open?: boolean; active?: boolean; children: ReactNode }) {
  return (
    <button aria-label={label} className={clsx("flex w-[49px] flex-col items-center", active && "bg-[#373d40]")}>
      <span className="flex flex-1 items-center">{children}</span>
      <span className={clsx("h-0.5", active ? "w-full" : "w-10", open && "bg-[#76b9ed]")} />
    </button>
  );
}

const petal = "M12 11.500C11.500 5 9 1.500 5.500 1.500 1 1.500 0 6 2 9c2 2.500 5 3 10 2.500z";

function Taskbar() {
  return (
    <footer className="flex h-10 shrink-0 bg-[#030b0e] text-white">
      <button aria-label="开始" className="flex w-12 items-center justify-center bg-black">
        <svg width="16" height="16" viewBox="0 0 16 16" fill="#fff">
          <path d="M0 2.300l6.500-.9v6.100H0zM7.300 1.300L16 0v7.500H7.300zM0 8.300h6.500v6.200L0 13.600zM7.300 8.300H16V16l-8.700-1.200z" />
        </svg>
      </button>
      <label className="flex w-[344px] items-center bg-[#333] pr-[15px] pl-[9px]">
        <span className="mr-[7px] size-5 shrink-0 rounded-full border-[3px] border-white" />
        <input
          type="text"
          aria-label="搜索"
          placeholder="在这里输入你要搜索的内容"
          className="min-w-0 flex-1 bg-transparent text-sm placeholder:text-[#9a9a9a]"
        />
        <svg width="12" height="18" fill="none" stroke="#aaa">
          <rect x="3.500" y="0.500" width="5" height="11" rx="1" />
          <path d="M0.500 8v5.500h11V8M6 13.500v4M3 17.500h6" />
        </svg>
      </label>
      <div className="flex pl-0.5">
        <TaskIcon label="花瓣">
          <svg width="24" height="24" viewBox="0 0 24 24" fill="#e8e8e8" stroke="#030b0e" strokeWidth="0.800">
            {[10, 70, 130, 190, 250, 310].map((a) => (
              <path key={a} d={petal} transform={`rotate(${a} 12 12)`} />
            ))}
          </svg>
        </TaskIcon>
        <TaskIcon label="广联达云">
          <svg width="20" height="21" viewBox="0 0 24 24" fill="none" stroke="#e4e4e4" strokeWidth="1.500">
            <path d="M23 1c-3 1.500-6 .5-10 1.500C6 4 1.500 9 1.500 14.500c0 5 4 8.500 9.500 8.500 6 0 9.500-4 9.500-8.500 0-4-3-6-6.500-6 2.500 2 3 4 2 6.500-1 2.500-3 3.500-5 3.500-3 0-5-2-5-5 0-4 3.500-6.500 8-6.500 5 0 8-2 9-6z" />
          </svg>
        </TaskIcon>
        <div className="w-1" />
        <TaskIcon label="Edge">
          <FaEdgeLegacy className="size-[21px] text-[#0a7bd8]" />
        </TaskIcon>
        <TaskIcon label="应用商店">
          <svg width="22" height="24" viewBox="0 0 22 24" fill="none">
            <path d="M7 8V3.500C7 0 14 0 14 3.500V7" stroke="#fff" strokeWidth="1.500" />
            <path d="M1 7.500L21 6v18L1 21z" fill="#fff" />
            <path d="M5.500 11l4.500-.5v4H5.500zM11 10.300l5.500-.5v4.700H11zM5.500 15.500H10v4l-4.500-.6zM11 15.500h5.500v5L11 19.700z" fill="#0a1418" />
          </svg>
        </TaskIcon>
        <TaskIcon label="文件资源管理器">
          <svg width="22" height="22" viewBox="0 0 22 22">
            <path d="M0 1h8l2 2h11v18H0z" fill="#f5c94e" />
            <path d="M1 4h21v16H1z" fill="#fde59a" />
            <path d="M4 22v-8l1-2h12l1 2v8h-4v-5H8v5z" fill="#39a9e4" />
          </svg>
        </TaskIcon>
        <TaskIcon label="广联达" open>
          <Swirl color="#1a8ff0" />
        </TaskIcon>
        <TaskIcon label="浏览器" open>
          <svg width="22" height="24" viewBox="0 0 22 24" fill="none">
            <circle cx="11" cy="12" r="10.500" fill="#4fba30" />
            <path d="M5.500 12.500h11c0-7.500-11-7.500-11 0 0 6 7.500 7 10.500 3" stroke="#fff" strokeWidth="2.400" />
            <path d="M2 20C3 10 12 3 20 3" stroke="#d6f07c" strokeWidth="1.200" />
          </svg>
        </TaskIcon>
        <TaskIcon label="广联达计价" open>
          <Swirl color="#2ba0dc" band />
        </TaskIcon>
        <TaskIcon label="GBQ4.0" open active>
          <AppIcon size={24} />
        </TaskIcon>
      </div>
      <div className="ml-auto flex items-center text-center leading-[17px]">
        <div className="mr-[18px]">
          24%
          <br />
          CPU使用
        </div>
        <div className="flex items-center gap-2.5">
          <svg width="12" height="8" fill="none" stroke="#fff"><path d="M0.500 7L6 1l5.500 6" strokeWidth="1.300" /></svg>
          <svg width="16" height="13" fill="none" stroke="#fff">
            <path d="M6 4.500h8.500v7H4.500V8M1 3h5v2.500L4.500 7H2.500L1 5.500zM2 0v3M5 0v3M15.500 6.500v3" />
            <path d="M6.500 6.500h6v3h-6z" fill="#fff" />
          </svg>
          <svg width="13" height="13" fill="none" stroke="#bbb">
            <path d="M0.500 12.500A12 12 0 0112.500 1.500M4 12.500a8.500 8.500 0 018.500-7.500M7.500 12.500a5 5 0 015-4.500" />
            <circle cx="11" cy="11.500" r="1.300" fill="#fff" />
          </svg>
          <svg width="16" height="13" fill="none" stroke="#fff">
            <path d="M0.500 4.500h3l3-3.500v11l-3-3.500h-3zM8.500 4.500c1 1 1 3 0 4" />
            <path d="M10.500 2.500c3 2 3 6 0 8M12.500 0.500c4 3 4 9 0 12" stroke="#999" />
          </svg>
          <span className="text-sm">中</span>
          <SogouLogo className="ml-1 size-[15px] text-[15px]" />
        </div>
        <div className="ml-[17px] w-[60px]">
          7:35
          <br />
          2017/8/24
        </div>
        <button aria-label="通知" className="relative ml-5 h-10 w-[36px] border-r border-[#444]">
          <svg width="16" height="15" className="absolute top-[11px] left-1.5"><path d="M0 0h16v12H8l-4 3v-3H0z" fill="#fff" /><path d="M3 3.500h10M3 6h10M3 8.500h10" stroke="#000" /></svg>
          <span className="absolute top-[19px] left-3 flex size-[17px] items-center justify-center rounded-full border border-[#888] bg-[#333] text-xs">2</span>
        </button>
        <div className="w-1" />
      </div>
    </footer>
  );
}

export default function App() {
  return (
    <div className="relative flex h-screen flex-col overflow-hidden bg-[#f0f0f0] font-['Open_Sans','Noto_Sans_CJK_SC',sans-serif] text-xs leading-4 text-black">
      <TitleBar />
      <MenuBar />
      <MainToolbar />
      <div className="flex min-h-0 flex-1">
        <SideTabs />
        <TreePanel />
        <Splitter />
        <main className="flex min-w-0 flex-1 flex-col">
          <EditToolbar />
          <div className="flex min-h-0 flex-1 flex-col font-['Liberation_Sans','Noto_Sans_CJK_SC',sans-serif]">
            <ItemGrid />
            <div className="flex h-[7px] shrink-0 justify-center pt-px">
              <div className="flex h-[6px] w-[100px] items-center justify-between border border-[#808080] bg-[#f4f4f4] px-1.5">
                <i className="size-px bg-[#000080]" />
                <i className="size-px bg-[#000080]" />
              </div>
            </div>
            <DetailTabs />
            <div className="flex min-h-0 flex-1">
              <ResourceGrid />
              <SidePanel />
            </div>
          </div>
        </main>
      </div>
      <StatusBar />
      <Taskbar />
      <div className="absolute -top-7 left-[202px] flex size-12 items-end justify-center rounded-full border-2 border-[#c9cfc9] bg-[#3fb950] pb-[5px] text-xs leading-3 font-bold text-white shadow-md">
        67
      </div>
    </div>
  );
}
